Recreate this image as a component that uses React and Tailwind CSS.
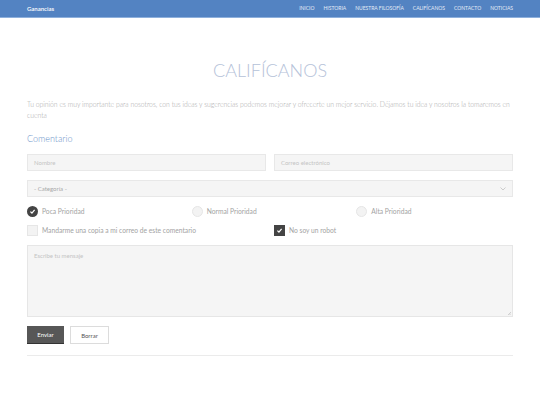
import React from "react";

const font = { fontFamily: "Lato, 'Open Sans', sans-serif" };

function Radio({ checked, label }) {
  return (
    <label className="flex items-center gap-[4px]">
      {checked ? (
        <span className="w-[11px] h-[11px] rounded-full bg-[#444] flex items-center justify-center">
          <svg width="7" height="7" viewBox="0 0 10 10">
            <path d="M2 5.2 L4.2 7.2 L8 2.8" stroke="#fff" strokeWidth="1.8" fill="none" />
          </svg>
        </span>
      ) : (
        <span className="w-[11px] h-[11px] rounded-full bg-[#f3f3f3] border border-[#e6e6e6]" />
      )}
      <span className="text-[6.7px] text-[#a3a3a3]">{label}</span>
    </label>
  );
}

function Check({ checked, label }) {
  return (
    <label className="flex items-center gap-[4px]">
      {checked ? (
        <span className="w-[11px] h-[11px] bg-[#444] flex items-center justify-center">
          <svg width="7" height="7" viewBox="0 0 10 10">
            <path d="M2 5.2 L4.2 7.2 L8 2.8" stroke="#fff" strokeWidth="1.8" fill="none" />
          </svg>
        </span>
      ) : (
        <span className="w-[11px] h-[11px] bg-[#f3f3f3] border border-[#e6e6e6]" />
      )}
      <span className="text-[6.7px] text-[#a3a3a3]">{label}</span>
    </label>
  );
}

export default function App() {
  return (
    <div className="w-[540px] h-[405px] bg-white overflow-hidden antialiased" style={font}>
      <div className="h-[18px] bg-[#5383c2] border-b border-[#8eb0dc] flex items-center justify-between px-[27px]">
        <span className="text-[6px] text-white font-semibold">Ganancias</span>
        <nav className="flex gap-[9px] text-[5px] text-[#e3ebf6]">
          <span>INICIO</span>
          <span>HISTORIA</span>
          <span>NUESTRA FILOSOFÍA</span>
          <span>CALIFÍCANOS</span>
          <span>CONTACTO</span>
          <span>NOTICIAS</span>
        </nav>
      </div>
      <div className="px-[27px]">
        <h1 className="text-center text-[18px] font-light text-[#b5c2d9] mt-[41px] leading-[22px]">
          CALIFÍCANOS
        </h1>
        <p className="mt-[18px] text-[6.8px] leading-[11px] text-[#a8a8a8] font-light">
          Tu opinión es muy importante para nosotros, con tus ideas y sugerencias podemos mejorar y ofrecerte un mejor servicio. Déjamos tu idea y nosotros la tomaremos en cuenta
        </p>
        <h2 className="mt-[12px] text-[9px] leading-[12px] text-[#6b93c9] font-light">Comentario</h2>
        <div className="grid grid-cols-2 gap-[8px] mt-[9px]">
          <div className="h-[17px] bg-[#f5f5f5] border border-[#e8e8e8] flex items-center px-[6px] text-[6px] text-[#c4c4c4]">Nombre</div>
          <div className="h-[17px] bg-[#f5f5f5] border border-[#e8e8e8] flex items-center px-[6px] text-[6px] text-[#c4c4c4]">Correo electrónico</div>
        </div>
        <div className="mt-[9px] h-[17px] bg-[#f5f5f5] border border-[#e8e8e8] flex items-center justify-between px-[6px] text-[6px] text-[#a8a8a8]">
          <span>- Categoría -</span>
          <svg width="6" height="4" viewBox="0 0 6 4">
            <path d="M0.5 0.5 L3 3 L5.5 0.5" stroke="#c0c0c0" strokeWidth="0.8" fill="none" />
          </svg>
        </div>
        <div className="grid grid-cols-3 gap-[8px] mt-[9px]">
          <Radio checked label="Poca Prioridad" />
          <Radio label="Normal Prioridad" />
          <Radio label="Alta Prioridad" />
        </div>
        <div className="grid grid-cols-2 gap-[8px] mt-[8px]">
          <Check label="Mandarme una copia a mi correo de este comentario" />
          <Check checked label="No soy un robot" />
        </div>
        <div className="relative mt-[9px] h-[72px] bg-[#f5f5f5] border border-[#e6e6e6] px-[6px] pt-[5px] text-[6px] text-[#c4c4c4]">
          Escribe tu mensaje
          <svg className="absolute right-[1px] bottom-[1px]" width="4" height="4" viewBox="0 0 4 4">
            <path d="M4 1 L1 4 M4 2.5 L2.5 4" stroke="#aaa" strokeWidth="0.5" />
          </svg>
        </div>
        <div className="flex gap-[6px] mt-[9px]">
          <button className="h-[18px] w-[37px] bg-[#575757] text-white text-[6px] border-b border-[#333]">Enviar</button>
          <button className="h-[18px] w-[39px] bg-white border border-[#dcdcdc] text-[#555] text-[6px]">Borrar</button>
        </div>
        <div className="mt-[11px] h-px bg-[#ebebeb]" />
      </div>
    </div>
  );
}
